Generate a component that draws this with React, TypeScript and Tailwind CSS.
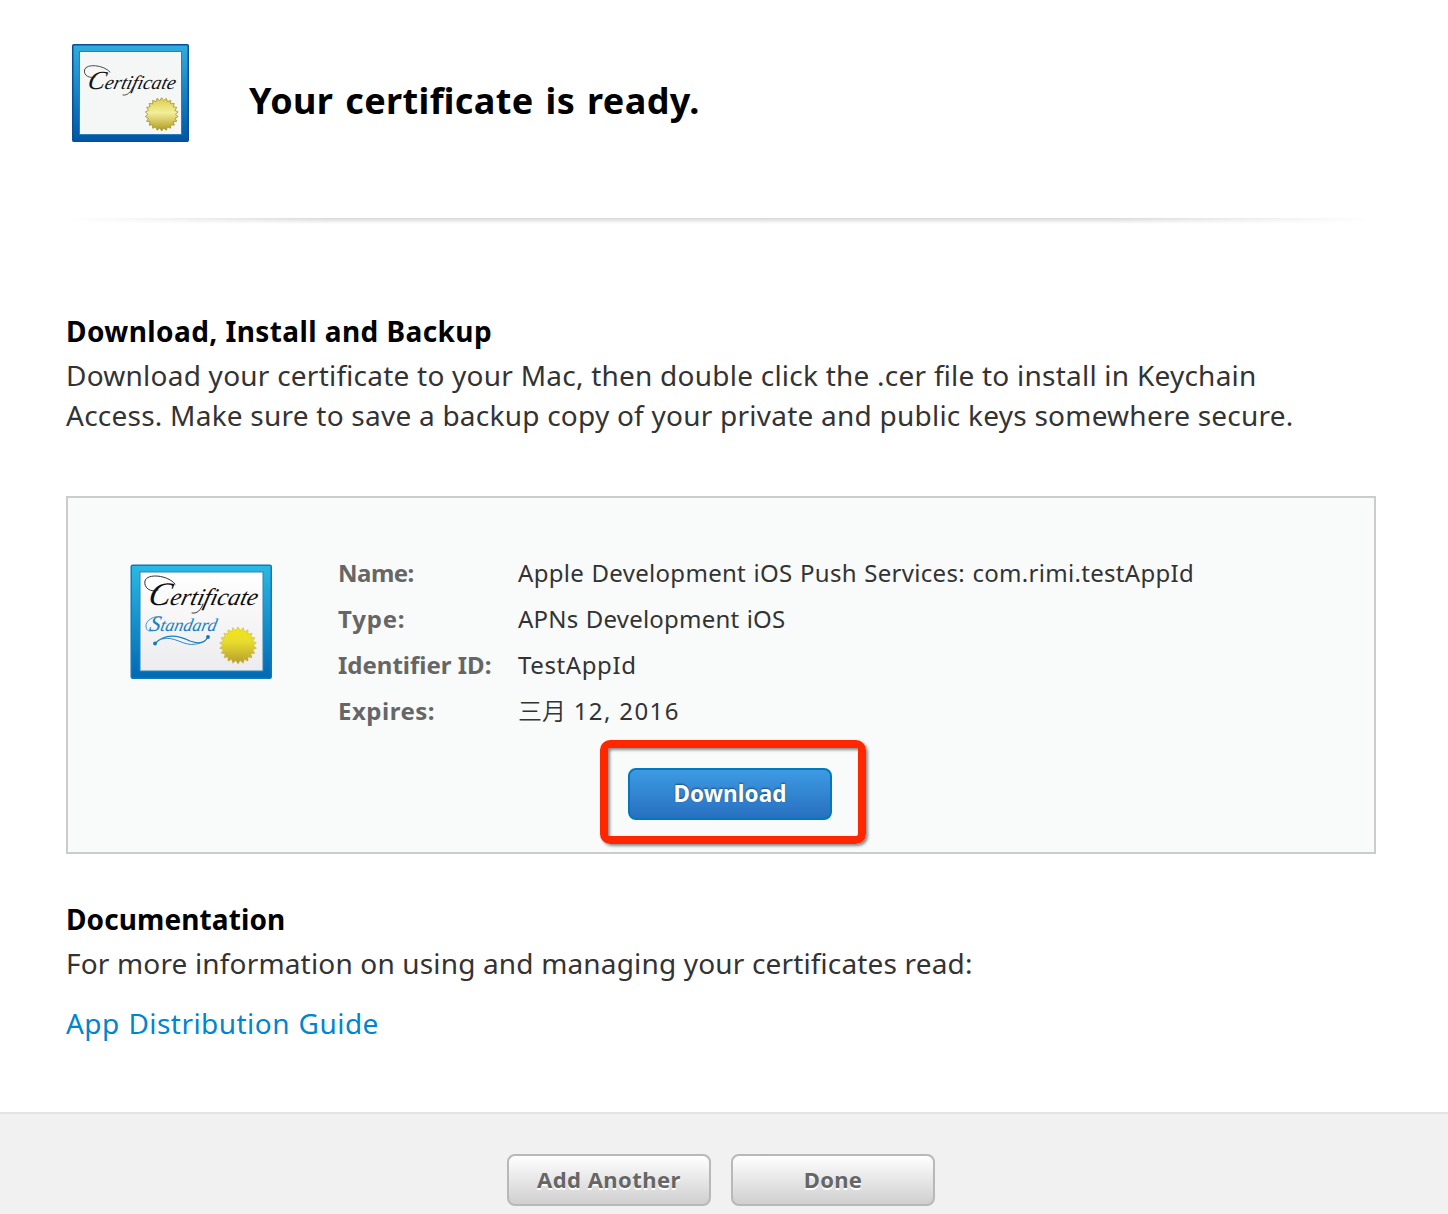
import type { ReactNode } from "react";

function sealPoints(cx: number, cy: number, outer: number, inner: number, teeth: number) {
  return Array.from({ length: teeth * 2 }, (_, i) => {
    const r = i % 2 === 0 ? outer : inner;
    const a = (Math.PI * i) / teeth - Math.PI / 2;
    return `${(cx + r * Math.cos(a)).toFixed(2)},${(cy + r * Math.sin(a)).toFixed(2)}`;
  }).join(" ");
}

function CertificateIcon() {
  return (
    <svg width="117" height="98" viewBox="0 0 117 98" className="block shrink-0 overflow-visible">
      <defs>
        <linearGradient id="frameA" x1="0" y1="0" x2="0" y2="1">
          <stop offset="0" stopColor="#31addf" />
          <stop offset="1" stopColor="#0055a6" />
        </linearGradient>
        <linearGradient id="sealA" x1="0" y1="0" x2="0" y2="1">
          <stop offset="0" stopColor="#d9cd4c" />
          <stop offset="0.45" stopColor="#f3ee9a" />
          <stop offset="1" stopColor="#b09a1c" />
        </linearGradient>
      </defs>
      <rect x="0.75" y="0.75" width="115.5" height="96.5" rx="1" fill="url(#frameA)" stroke="#0a4f93" strokeWidth="1.5" />
      <rect x="7.5" y="7.5" width="102" height="83" fill="#f5f7f7" stroke="#2a7fb8" strokeWidth="1" />
      <g transform="translate(14.5 44.5) skewX(-14)">
        <text x="0" y="0" fontSize="19.6" className="font-['Liberation_Serif',serif] italic" fill="#111">
          <tspan fontSize="26">C</tspan>ertificate
        </text>
      </g>
      <g fill="none" stroke="#222" strokeWidth="0.8" strokeLinecap="round">
        <path d="M38 28C32 21 14 19 12.5 26C11.5 32 18 34.5 23 33" />
        <path d="M61 43C59 48 55 52 51 51" />
      </g>
      <polygon points={sealPoints(89.7, 70.3, 16.6, 13.8, 22)} fill="url(#sealA)" stroke="#a4901c" strokeWidth="0.8" />
    </svg>
  );
}

function StandardCertificateIcon() {
  return (
    <svg width="142" height="115" viewBox="0 0 142 115" className="block shrink-0 overflow-visible">
      <defs>
        <linearGradient id="frameB" x1="0" y1="0" x2="0" y2="1">
          <stop offset="0" stopColor="#2ab9e4" />
          <stop offset="1" stopColor="#0069b4" />
        </linearGradient>
        <linearGradient id="paperB" x1="0" y1="0" x2="0" y2="1">
          <stop offset="0" stopColor="#ffffff" />
          <stop offset="1" stopColor="#ececee" />
        </linearGradient>
        <linearGradient id="sealB" x1="0" y1="0" x2="0" y2="1">
          <stop offset="0" stopColor="#f2e713" />
          <stop offset="0.4" stopColor="#e8dc30" />
          <stop offset="1" stopColor="#b59b2c" />
        </linearGradient>
      </defs>
      <rect x="1.25" y="1.25" width="140" height="113" rx="1.5" fill="url(#frameB)" stroke="#1578b5" strokeWidth="1.5" />
      <rect x="10" y="8" width="123" height="99" fill="url(#paperB)" stroke="#2b83b4" strokeWidth="1" />
      <g transform="translate(17 41) skewX(-14)">
        <text x="0" y="0" fontSize="24.2" className="font-['Liberation_Serif',serif] italic" fill="#0d0d0d">
          <tspan fontSize="33">C</tspan>ertificate
        </text>
      </g>
      <g fill="none" stroke="#1a1a1a" strokeWidth="0.9" strokeLinecap="round">
        <path d="M45 20C38 11 17 9 15 17C13.5 24 21 29 28 26" />
        <path d="M73 40C71 46 67 50 62 49" />
      </g>
      <g transform="translate(18.5 66.5) skewX(-12)">
        <text x="0" y="0" fontSize="18" className="font-['Liberation_Serif',serif] italic" fill="#1b7fc2">
          <tspan fontSize="22">S</tspan>tandard
        </text>
      </g>
      <g fill="none" stroke="#1b7fc2" strokeLinecap="round">
        <path d="M31 53C25 51 15 56 16 63C16.5 67 20 68 23 66" strokeWidth="0.8" />
        <path d="M25 79.5C36 68 50 72 60 77C68 80 75 79 78 73" strokeWidth="1.2" />
        <path d="M32 75C44 71 54 83 66 80C73 79 76 77 78 73" strokeWidth="0.9" />
      </g>
      <circle cx="25" cy="79.5" r="1.9" fill="#1477bb" />
      <circle cx="78" cy="73" r="1.9" fill="#1477bb" />
      <polygon points={sealPoints(108, 81.5, 18.6, 15.2, 22)} fill="url(#sealB)" stroke="#c5ad31" strokeWidth="0.5" />
    </svg>
  );
}

function Row({ label, labelClass, valueClass, children }: { label: string; labelClass: string; valueClass: string; children: ReactNode }) {
  return (
    <div className="flex h-[46px] items-center">
      <dt className={`w-[180px] shrink-0 font-bold text-[#666] ${labelClass}`}>{label}</dt>
      <dd className={valueClass}>{children}</dd>
    </div>
  );
}

function GrayButton({ className, children }: { className: string; children: ReactNode }) {
  return (
    <button className={`flex h-[52px] w-[204px] items-center justify-center rounded-lg border-2 border-[#b8b8b8] bg-linear-to-b from-white to-[#cfcfcf] pb-0.5 text-[22px] font-bold text-[#666] [text-shadow:0_2px_0_#fff] ${className}`}>
      {children}
    </button>
  );
}

export default function App() {
  return (
    <div className="flex h-[1214px] w-[1448px] flex-col overflow-hidden whitespace-nowrap bg-white font-['Noto_Sans','Noto_Sans_CJK_SC',sans-serif] text-[#333] [font-feature-settings:'liga'_1]">
      <main className="h-[1112px] shrink-0 px-[66px] pt-11">
        <header className="flex pl-1.5">
          <CertificateIcon />
          <h1 className="ml-[60px] mt-[33px] text-[36px] leading-[48px] font-bold tracking-[0.4px] text-black [word-spacing:2.1px]">Your certificate is ready.</h1>
        </header>
        <div className="mt-[76px] h-1.5 w-[1310px] bg-linear-to-b from-[#d8d8d8] to-white [mask-image:linear-gradient(to_right,transparent,black_20%,black_80%,transparent)]" />

        <section className="mt-[87px] text-[28px] leading-10">
          <h2 className="font-bold tracking-[0.42px] text-black">Download, Install and Backup</h2>
          <p className="mt-1 tracking-[0.235px]">
            Download your certificate to your Mac, then double click the .cer file to install in Keychain
            <br />
            Access. Make sure to save a backup copy of your private and public keys somewhere secure.
          </p>
        </section>

        <section className="mt-[61px] h-[358px] w-[1310px] border-2 border-[#ccc] bg-[#f9fbfa] pt-[52px] pl-[62px]">
          <div className="flex">
            <div className="mt-3.5 w-[208px]">
              <StandardCertificateIcon />
            </div>
            <dl className="text-[24px]">
              <Row label="Name:" labelClass="tracking-[-0.5px]" valueClass="tracking-[0.3px] [word-spacing:0.9px]">
                Apple Development iOS Push Services: com.rimi.testAppId
              </Row>
              <Row label="Type:" labelClass="tracking-[0.8px]" valueClass="tracking-[0.2px] [word-spacing:1px]">
                APNs Development iOS
              </Row>
              <Row label="Identifier ID:" labelClass="" valueClass="tracking-[0.6px]">
                TestAppId
              </Row>
              <Row label="Expires:" labelClass="tracking-[0.5px]" valueClass="">
                <span className="font-[350]">三月</span>
                <span className="tracking-[1.4px]"> 12, 2016</span>
              </Row>
            </dl>
          </div>
          <div className="mt-1.5 ml-[470px] flex h-[104px] w-[266px] items-center justify-center rounded-[10px] border-8 border-[#ff2600] pr-1.5 shadow-[2px_2px_3px_rgba(0,0,0,0.45),inset_2px_2px_3px_rgba(0,0,0,0.45)]">
            <button className="mt-1 flex h-[52px] w-[204px] items-center justify-center rounded-lg border-2 border-[#0079bc] bg-linear-to-b from-[#3d9ae3] to-[#2870c0] text-[22.5px] font-bold tracking-[0.1px] text-white [text-shadow:0_-1px_2px_rgba(0,0,0,0.45)]">
              Download
            </button>
          </div>
        </section>

        <section className="mt-[45px] text-[28px] leading-10">
          <h2 className="font-bold tracking-[0.1px] text-black">Documentation</h2>
          <p className="mt-1 tracking-[0.16px]">For more information on using and managing your certificates read:</p>
          <a className="mt-5 block tracking-[0.45px] text-[#0085cf] [word-spacing:1px]">App Distribution Guide</a>
        </section>
      </main>
      <footer className="flex flex-1 justify-center gap-5 border-t-2 border-[#e3e3e3] bg-[#f1f1f1] pt-10 pr-1.5">
        <GrayButton className="tracking-[0.45px]">Add Another</GrayButton>
        <GrayButton className="tracking-[0.3px]">Done</GrayButton>
      </footer>
    </div>
  );
}
